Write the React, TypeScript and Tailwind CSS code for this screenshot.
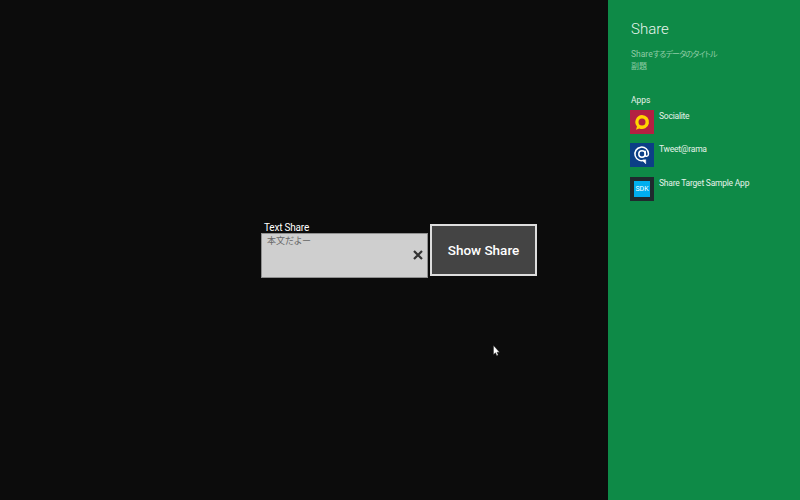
const FONT = "font-['Roboto','Noto_Sans_CJK_JP',sans-serif]";

const apps = [
  { name: "Socialite", tile: "bg-[#b32042]", icon: "socialite", mb: "mb-[9px]" },
  { name: "Tweet@rama", tile: "bg-[#0c3f86]", icon: "tweet", mb: "mb-[10px]" },
  { name: "Share Target Sample App", tile: "bg-[#1f2a2e]", icon: "sdk", mb: "" },
];

const SocialiteIcon = () => (
  <svg viewBox="0 0 24 24" className="w-6 h-6">
    <path d="M12 5a7 7 0 1 1-2.8 13.4l-3.2 1.3 1-3.2A7 7 0 0 1 12 5z" fill="#ffd400" />
    <circle cx="12" cy="12" r="3.5" fill="#b32042" />
  </svg>
);

const TweetIcon = () => (
  <svg viewBox="0 0 24 24" className="w-6 h-6" fill="none" stroke="#fff" strokeWidth="1.5">
    <circle cx="12" cy="11" r="3.2" />
    <path d="M15.2 7.8v4.4c0 1.6 3.1 1.8 3.3-1.2a6.8 6.8 0 1 0-3.8 6" />
    <path d="M12.5 17.5l3.2 3.3v-4.3" fill="#fff" strokeWidth="0.6" />
  </svg>
);

const AppTile = ({ name, tile, icon, mb }: { name: string; tile: string; icon: string; mb: string }) => (
  <div className={`flex items-start gap-[5px] ${mb}`}>
    <div className={`w-6 h-6 shrink-0 flex items-center justify-center ${tile}`}>
      {icon === "socialite" && <SocialiteIcon />}
      {icon === "tweet" && <TweetIcon />}
      {icon === "sdk" && (
        <div className="w-4 h-4 bg-[#00aeef] flex items-center justify-center text-[7px] leading-none text-white">
          SDK
        </div>
      )}
    </div>
    <span className="text-[8.5px] leading-[12px] tracking-[-0.23px] text-[#e6f3ea]">{name}</span>
  </div>
);

export default function App() {
  return (
    <div className={`relative flex w-[800px] h-[500px] overflow-hidden bg-[#0c0c0c] ${FONT}`}>
      <main className="flex-1 pl-[261px] pt-[222px]">
        <div className="flex items-start gap-[2px]">
          <div className="w-[167px]">
            <div className="pl-[3px] text-[10px] leading-[11px] tracking-[-0.2px] text-white">Text Share</div>
            <div className="relative h-[45px] bg-[#cfcfcf] border border-[#8f8f8f] pl-[5px] text-[9px] leading-[14px] text-[#666] [font-feature-settings:'palt']">
              本文だよー
              <svg viewBox="0 0 10 10" className="absolute right-[4px] top-[16px] w-[10px] h-[10px]" stroke="#333" strokeWidth="2.2">
                <path d="M1 1l8 8M9 1l-8 8" />
              </svg>
            </div>
          </div>
          <button className="mt-[2px] w-[107px] h-[52px] bg-[#444] border-2 border-[#dedede] text-[13.5px] font-medium text-white">
            Show Share
          </button>
        </div>
      </main>

      <aside className="w-[192px] h-full bg-[#0e8a47] pl-[23px]">
        <h1 className="pt-[20px] text-[15px] leading-[18px] font-light text-[#e9f5ee]">Share</h1>
        <p className="mt-[10px] text-[8px] leading-[12px] tracking-[-0.8px] text-[#8fcaa6] [font-feature-settings:'palt']">
          <span className="text-[8.5px] tracking-normal">Share</span>するデータのタイトル
        </p>
        <p className="text-[8px] leading-[12px] text-[#8fcaa6]">副題</p>
        <h2 className="mt-[21px] text-[8.5px] leading-[12px] text-[#e6f3ea]">Apps</h2>
        <div className="-ml-px mt-[4px]">
          {apps.map((a) => (
            <AppTile key={a.name} {...a} />
          ))}
        </div>
      </aside>

      <svg viewBox="0 0 8 12" className="absolute left-[493px] top-[345px] w-[8px] h-[12px]">
        <path d="M0.5 0.5v9l2-1.8 1.3 3 1.4-.6-1.3-2.9h2.6z" fill="#fff" stroke="#222" strokeWidth="0.4" />
      </svg>
    </div>
  );
}
